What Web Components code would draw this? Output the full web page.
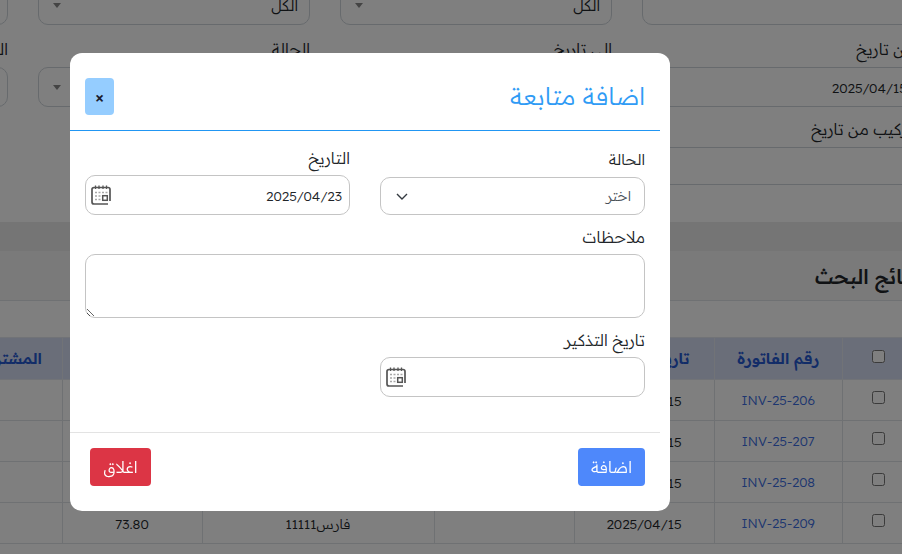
<!DOCTYPE html>
<html lang="ar">
<head>
<meta charset="utf-8">
<style>
  html, body { margin: 0; height: 100%; overflow: hidden; }
  body { font-family: "Readex Pro", "Noto Sans", sans-serif; font-weight: 300; color: #212529; background: #fff; }
</style>
</head>
<body>
<template id="tpl-field">
  <style>
    :host { display: block; direction: rtl; }
    .lbl { display: block; height: 23px; line-height: 23px; margin-bottom: 6px; font-size: 16px; white-space: nowrap; }
    .box { height: var(--box-h, 40px); box-sizing: border-box; border: 1px solid #ced4da; border-radius: 10px; display: flex; align-items: center; justify-content: space-between; padding: 0 var(--pad, 11px) 0 7px; font-size: var(--fs, 13.600px); background: #fff; }
    .arrow { width: 0; height: 0; border: 4px solid transparent; border-top: 5px solid #888; border-bottom: 0; margin-left: 7px; }
    :host([plain]) .arrow { display: none; }
  </style>
  <span class="lbl"><slot name="label"></slot></span>
  <div class="box"><span><slot></slot></span><span class="arrow"></span></div>
</template>

<template id="tpl-date">
  <style>
    :host { display: flex; direction: rtl; box-sizing: border-box; height: 40px; border: 1px solid #c4c4c4; border-radius: 10px; align-items: center; justify-content: space-between; padding: 0 7px 0 5px; font-size: 13.600px; background: #fff; }
    svg { display: block; width: 20px; height: 20px; }
  </style>
  <span><slot></slot></span>
  <svg viewBox="0 0 20 20" fill="none">
    <path d="M17 19H3a2 2 0 0 1-2-2V4.500a2 2 0 0 1 2-2h14a2 2 0 0 1 2 2V16" stroke="#555" stroke-width="1.700"/>
    <path d="M4.500 .5v3.500M8 .5v3.500M12 .5v3.500M15.500 .5v3.500" stroke="#555" stroke-width="1.300"/>
    <path d="M4 7.500h2M7.500 7.500h2M11 7.500h2M14.500 7.500h2M4 11h2M7.500 11h2M4 14.500h2M7.500 14.500h2" stroke="#a8a8a8" stroke-width="1.400"/>
    <rect x="11.700" y="10.700" width="4.600" height="4.600" stroke="#555" stroke-width="1.500"/>
  </svg>
</template>

<template id="tpl-modal">
  <style>
    :host { position: absolute; left: 70px; top: 53px; width: 600px; height: 458px; box-sizing: border-box; background: #fff; border-radius: 12px; direction: rtl; display: flex; flex-direction: column; color: #212529; font-size: 16px; }
    header { margin-right: 10px; height: 78px; box-sizing: border-box; border-bottom: 1px solid #2196f3; display: flex; align-items: center; justify-content: space-between; padding: 8px 15px 0 15px; }
    h5 { margin: 0; font-size: 24.500px; font-weight: 300; color: #2f9bf5; line-height: 30px; }
    .close { width: 29px; height: 37px; margin-top: 2px; background: #95cdff; border-radius: 4px; display: flex; align-items: center; justify-content: center; font: 700 16px/1 "Noto Sans", sans-serif; color: #1a1a2e; padding-top: 2px; box-sizing: border-box; }
    .body { flex: 1; padding: 17px 25px 0 15px; box-sizing: border-box; }
    .cols { display: grid; grid-template-columns: 265px 265px; column-gap: 30px; }
    label { display: block; font-size: 16px; line-height: 20px; }
    .select { box-sizing: border-box; height: 38px; border: 1px solid #c4c4c4; border-radius: 10px; display: flex; align-items: center; justify-content: space-between; padding: 0 13px 0 14px; color: #495057; margin-top: 7px; font-size: 14px; }
    .select svg { width: 14px; height: 14px; display: block; }
    x-date { margin-top: 7px; }
    textarea { display: block; width: 100%; box-sizing: border-box; height: 64px; margin-top: 7px; border: 1px solid #c4c4c4; border-radius: 10px; background: #fff; }
    footer { margin-right: 10px; height: 79px; box-sizing: border-box; border-top: 1px solid #e3e3e3; display: flex; align-items: flex-start; justify-content: space-between; padding: 15px 15px 0 20px; }
    .btn { height: 38px; border-radius: 4px; display: flex; align-items: center; justify-content: center; color: #fff; font-size: 16px; }
    .add { width: 67px; background: #4e88fb; }
    .shut { width: 61px; background: #dc3545; }
  </style>
  <header>
    <h5>اضافة متابعة</h5>
    <span class="close">×</span>
  </header>
  <div class="body">
    <div class="cols">
      <div>
        <label style="margin-top:2px;font-size:15.200px">الحالة</label>
        <div class="select"><span>اختر</span>
          <svg viewBox="0 0 14 14" fill="none" stroke="#343a40" stroke-width="1.400"><path d="M2 5l5 5 5-5"/></svg>
        </div>
      </div>
      <div>
        <label>التاريخ</label>
        <x-date>2025/04/23</x-date>
      </div>
    </div>
    <label style="margin-top:12px">ملاحظات</label>
    <textarea></textarea>
    <label style="margin-top:12px">تاريخ التذكير</label>
    <div class="cols"><x-date></x-date></div>
  </div>
  <footer>
    <span class="btn add">اضافة</span>
    <span class="btn shut">اغلاق</span>
  </footer>
</template>

<template id="tpl-filters">
  <style>
    :host { display: block; width: 1178px; margin: -44px 0 0 -264px; padding-bottom: 37px; direction: rtl; }
    .grid { display: grid; grid-template-columns: repeat(4, 272px); column-gap: 30px; row-gap: 11px; }
  </style>
  <div class="grid"><slot></slot></div>
</template>

<template id="tpl-results">
  <style>
    :host { display: block; direction: rtl; }
    .strip { height: 29px; background: #ebebeb; }
    .head { height: 50px; box-sizing: border-box; background: #f5f5f5; border-bottom: 1px solid #dee2e6; display: flex; align-items: center; padding-top: 3px; }
    h3 { margin: 0 -16px 0 0; font-size: 20px; font-weight: 500; line-height: 28px; white-space: nowrap; }
    .gap { height: 36px; }
    table { border-collapse: collapse; table-layout: fixed; width: 953.500px; margin-right: -12px; font-size: 13.600px; text-align: center; }
    th { height: 41px; background: #d4dcf3; color: #2458d0; font-weight: 600; border: 1px solid #e2e6ee; padding: 0; font-size: 15.200px; white-space: nowrap; overflow: hidden; }
    td { height: 40px; border: 1px solid #dee2e6; padding: 0; }
    td.inv { color: #3a6ce0; font-size: 13.300px; }
    input { margin: 0 0 6px; width: 13px; height: 13px; vertical-align: middle; }
  </style>
  <div class="strip"></div>
  <div class="head"><h3>نتائج البحث</h3></div>
  <div class="gap"></div>
  <table>
    <colgroup><col style="width:71px"><col style="width:128.500px"><col style="width:140px"><col style="width:140px"><col style="width:232px"><col style="width:140px"><col style="width:102px"></colgroup>
    <tr><th><input type="checkbox"></th><th>رقم الفاتورة</th><th>تاريخ الفاتورة</th><th></th><th></th><th></th><th>المشترك</th></tr>
    <tr><td><input type="checkbox"></td><td class="inv">INV-25-206</td><td>2025/04/15</td><td></td><td></td><td></td><td></td></tr>
    <tr><td><input type="checkbox"></td><td class="inv">INV-25-207</td><td>2025/04/15</td><td></td><td></td><td></td><td></td></tr>
    <tr><td><input type="checkbox"></td><td class="inv">INV-25-208</td><td>2025/04/15</td><td></td><td></td><td></td><td></td></tr>
    <tr><td><input type="checkbox"></td><td class="inv">INV-25-209</td><td>2025/04/15</td><td></td><td>فارس11111</td><td>73.80</td><td></td></tr>
  </table>
</template>

<template id="tpl-backdrop">
  <style>
    :host { position: fixed; inset: 0; background: rgba(0,0,0,.5); display: block; }
  </style>
  <slot></slot>
</template>

<x-filters>
  <x-field plain style="margin-bottom:2px"></x-field>
  <x-field style="margin-bottom:2px;--fs:15.200px">الكل</x-field>
  <x-field style="margin-bottom:2px;--fs:15.200px">الكل</x-field>
  <x-field plain style="margin-bottom:2px"></x-field>
  <x-field plain style="--pad:6px"><span slot="label">من تاريخ</span>2025/04/15</x-field>
  <x-field plain><span slot="label">الى تاريخ</span></x-field>
  <x-field><span slot="label">الحالة</span></x-field>
  <x-field plain><span slot="label">الموظف</span></x-field>
  <x-field plain style="--box-h:38px"><span slot="label">تركيب من تاريخ</span></x-field>
</x-filters>
<x-results></x-results>
<x-backdrop><x-modal></x-modal></x-backdrop>

<script>
function define(name, tplId) {
  customElements.define(name, class extends HTMLElement {
    constructor() {
      super();
      this.attachShadow({mode: 'open'}).appendChild(document.getElementById(tplId).content.cloneNode(true));
    }
  });
}
define('x-field', 'tpl-field');
define('x-date', 'tpl-date');
define('x-modal', 'tpl-modal');
define('x-filters', 'tpl-filters');
define('x-results', 'tpl-results');
define('x-backdrop', 'tpl-backdrop');
</script>
</body>
</html>
